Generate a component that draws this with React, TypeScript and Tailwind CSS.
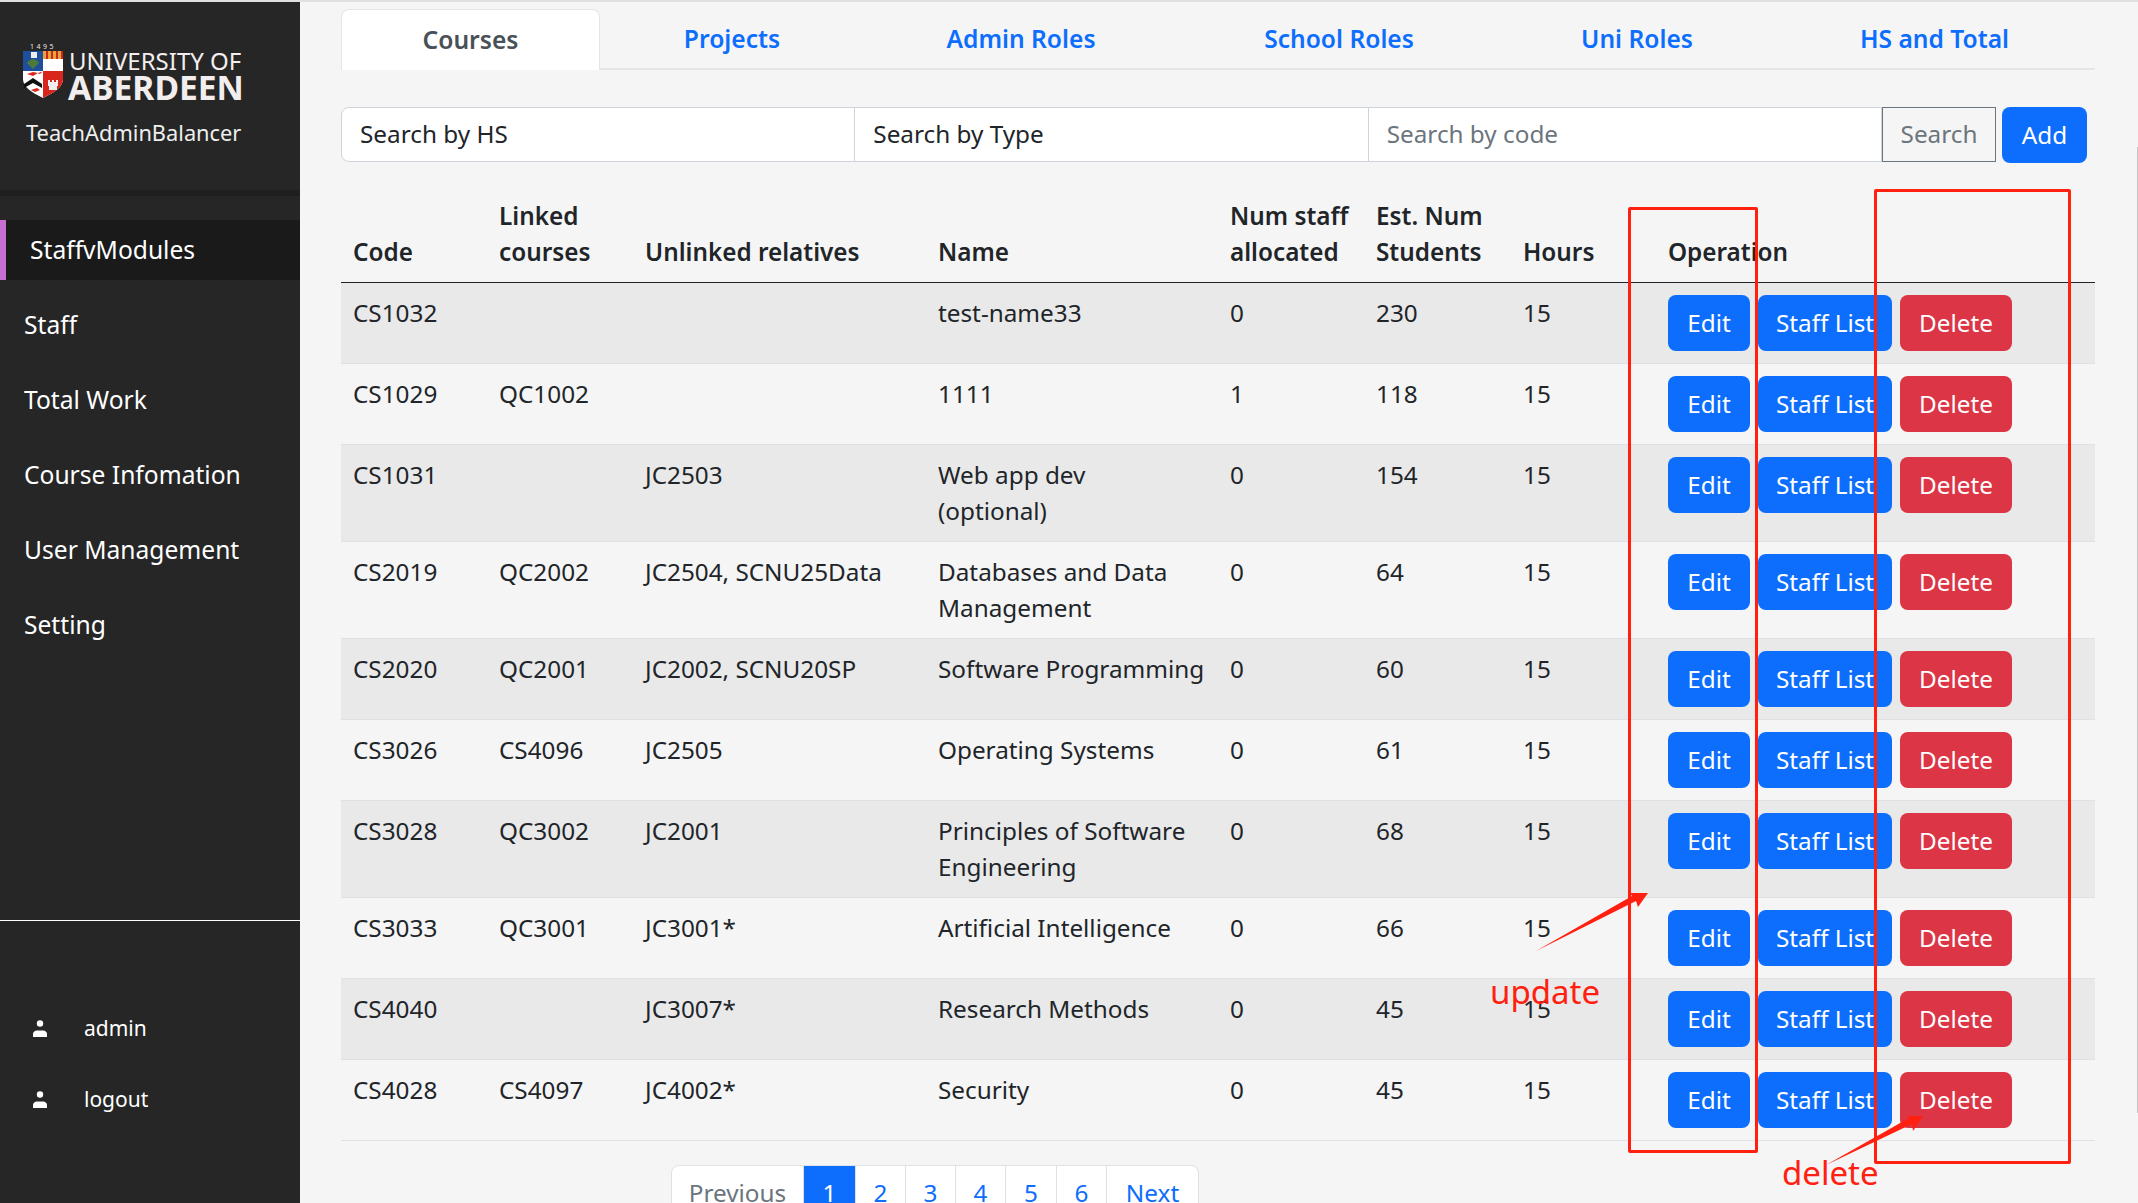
const font = { fontFamily: '"Noto Sans", sans-serif' }

const tabs = [
  { label: 'Courses', width: 'w-[259px]' },
  { label: 'Projects', width: 'w-[264px]' },
  { label: 'Admin Roles', width: 'w-[314px]' },
  { label: 'School Roles', width: 'w-[322px]' },
  { label: 'Uni Roles', width: 'w-[274px]' },
  { label: 'HS and Total', width: 'w-[321px]' },
]

const navItems = ['Staff', 'Total Work', 'Course Infomation', 'User Management', 'Setting']

const rows = [
  ['CS1032', '', '', 'test-name33', '0', '230'],
  ['CS1029', 'QC1002', '', '1111', '1', '118'],
  ['CS1031', '', 'JC2503', 'Web app dev\n(optional)', '0', '154'],
  ['CS2019', 'QC2002', 'JC2504, SCNU25Data', 'Databases and Data\nManagement', '0', '64'],
  ['CS2020', 'QC2001', 'JC2002, SCNU20SP', 'Software Programming', '0', '60'],
  ['CS3026', 'CS4096', 'JC2505', 'Operating Systems', '0', '61'],
  ['CS3028', 'QC3002', 'JC2001', 'Principles of Software\nEngineering', '0', '68'],
  ['CS3033', 'QC3001', 'JC3001*', 'Artificial Intelligence', '0', '66'],
  ['CS4040', '', 'JC3007*', 'Research Methods', '0', '45'],
  ['CS4028', 'CS4097', 'JC4002*', 'Security', '0', '45'],
]

const pages = [
  { label: 'Previous', cls: 'w-[133px] text-[#6c757d] bg-white' },
  { label: '1', cls: 'w-[52px] text-white bg-[#0d6efd]' },
  { label: '2', cls: 'w-[50px] text-[#0d6efd] bg-white' },
  { label: '3', cls: 'w-[50px] text-[#0d6efd] bg-white' },
  { label: '4', cls: 'w-[50px] text-[#0d6efd] bg-white' },
  { label: '5', cls: 'w-[51px] text-[#0d6efd] bg-white' },
  { label: '6', cls: 'w-[50px] text-[#0d6efd] bg-white' },
  { label: 'Next', cls: 'w-[92px] text-[#0d6efd] bg-white' },
]

function Shield() {
  return (
    <svg width="42" height="56" viewBox="0 0 42 56" className="mb-[2px] shrink-0">
      <text x="21" y="6" textAnchor="middle" fontSize="7" letterSpacing="2.5" fill="#e5e5e5">1495</text>
      <path d="M1 8h40v28c0 8-8 13-20 19C9 49 1 44 1 36z" fill="#fff" />
      <path d="M1 8h20v20H1z" fill="#1f4e9c" />
      <path d="M21 8h20v8H21z" fill="#e9a13b" />
      <path d="M24 8h2v8h-2zM29 8h2v8h-2zM34 8h2v8h-2zM39 8h2v8h-2z" fill="#c8281e" />
      <path d="M21 28h20v8c0 8-8 13-20 19z" fill="#d9261c" />
      <path d="M9 9h6v6H9z" fill="#eee" />
      <path d="M5 20c3-5 9-5 12 0l-6 6z" fill="#4c7a3a" />
      <path d="M5 31l6-2 5 1-5 3zM17 31l-1-1 3-1 1 1z" fill="#d9261c" />
      <path d="M2 41l9-6 9 6v4l-9-5-9 5z" fill="#111" />
      <path d="M9 47l6-2 3 2-5 2z" fill="#d9261c" />
      <path d="M26 43v-6h2v2h2v-2h2v2h2v-2h2v6h-1v4h-8v-4z" fill="#eee" />
    </svg>
  )
}

function UserIcon() {
  return (
    <svg width="14" height="17" viewBox="0 0 14 17" className="shrink-0 fill-white">
      <circle cx="7" cy="3.5" r="3.2" />
      <path d="M0 17v-3c0-2 2-3.5 4-3.5h6c2 0 4 1.5 4 3.5v3z" />
    </svg>
  )
}

function Sidebar() {
  return (
    <aside className="flex w-[300px] shrink-0 flex-col bg-[#262626] text-white">
      <div className="h-[188px] pl-[22px] pt-[41px]">
        <div className="flex items-end gap-[4px]">
          <Shield />
          <div className="leading-none text-[#f3eeee]">
            <div className="pl-[1px] text-[24px] leading-[26px]">UNIVERSITY OF</div>
            <div className="text-[33.6px] font-bold leading-[27px]">ABERDEEN</div>
          </div>
        </div>
        <div className="mt-[17px] pl-[4px] text-[21.8px] leading-[30px] text-[#eeeeee]">TeachAdminBalancer</div>
      </div>
      <div className="h-[6px] bg-[#1f1f1f]" />
      <nav className="mt-[24px] text-[24.6px]">
        <div className="flex h-[60px] items-center border-l-[6px] border-[#c56fd0] bg-[#1a1a1a] pl-[24px]">StaffvModules</div>
        <div className="mt-[15px] flex flex-col gap-[15px]">
          {navItems.map((item) => (
            <div key={item} className="flex h-[60px] items-center pl-[24px]">{item}</div>
          ))}
        </div>
      </nav>
      <div className="mt-[265px] h-[1px] bg-white" />
      <div className="flex flex-col gap-[54px] pl-[33px] pt-[99px] text-[21px]">
        {['admin', 'logout'].map((item) => (
          <div key={item} className="flex h-[17px] items-center gap-[37px]">
            <UserIcon />
            <span>{item}</span>
          </div>
        ))}
      </div>
    </aside>
  )
}

function Row({ cells }: { cells: string[] }) {
  const [code, linked, unlinked, name, num, est] = cells
  return (
    <div className="grid grid-cols-[146px_146px_293px_292px_146px_147px_145px_439px] border-b border-[#dee2e6] odd:bg-[#e9e9e9]">
      {[code, linked, unlinked, name, num, est, '15'].map((cell, i) => (
        <div key={i} className="whitespace-pre-line px-3 py-3 leading-[36px] text-[#212529]">{cell}</div>
      ))}
      <div className="flex gap-2 px-3 py-3 text-white">
        <button className="h-14 w-[82px] rounded-[8px] bg-[#0d6efd]">Edit</button>
        <button className="h-14 w-[134px] rounded-[8px] bg-[#0d6efd]">Staff List</button>
        <button className="h-14 w-[112px] rounded-[8px] bg-[#dc3545]">Delete</button>
      </div>
    </div>
  )
}

function Annotations() {
  return (
    <>
      <div className="absolute left-[1628px] top-[207px] h-[946px] w-[130px] rounded-[2px] border-[3px] border-[#ff2010]" />
      <div className="absolute left-[1874px] top-[189px] h-[975px] w-[197px] rounded-[2px] border-[3px] border-[#ff2010]" />
      <svg width="2138" height="1203" className="pointer-events-none absolute left-0 top-0">
        <polygon points="1536,951 1632,896 1630,893 1648,893 1638,907 1636,901" fill="#ff2010" />
        <polygon points="1826,1165 1909,1118 1907,1116 1923,1116 1913,1131 1912,1124" fill="#ff2010" />
      </svg>
      <span className="absolute left-[1490px] top-[969px] text-[33px] leading-[46px] text-[#ff2010]">update</span>
      <span className="absolute left-[1782px] top-[1150px] text-[33px] leading-[46px] text-[#ff2010]">delete</span>
    </>
  )
}

export default function App() {
  return (
    <div style={font} className="relative h-[1203px] w-[2138px] overflow-hidden bg-[#f5f5f5] pt-[2px] text-[24.3px]">
      <div className="absolute left-0 top-0 h-[2px] w-full bg-[#e0e0e0]" />
      <div className="absolute right-0 top-[147px] h-[966px] w-[1px] bg-[#c4c4c4]" />
      <div className="flex h-full">
        <Sidebar />
        <main className="ml-[41px] w-[1754px] pt-[7px]">
          <div className="flex h-[61px] border-b-2 border-[#e5e5e5]">
            {tabs.map((tab, i) => (
              <div
                key={tab.label}
                className={`flex h-[61px] items-center justify-center rounded-t-[8px] text-[24.6px] font-semibold ${tab.width} ${i === 0 ? 'border border-b-0 border-[#e5e5e5] bg-white text-[#495057]' : 'text-[#0d6efd]'}`}
              >
                {tab.label}
              </div>
            ))}
          </div>
          <div className="mt-[37px] flex items-stretch">
            <div className="flex h-[55px] w-[1541px] rounded-l-[8px] border border-[#ced4da] bg-white">
              <div className="flex flex-1 items-center border-r border-[#ced4da] px-[18px] text-[#212529]">Search by HS</div>
              <div className="flex flex-1 items-center border-r border-[#ced4da] px-[18px] text-[#212529]">Search by Type</div>
              <div className="flex flex-1 items-center px-[18px] text-[#6c757d]">Search by code</div>
            </div>
            <div className="flex h-[55px] w-[114px] items-center justify-center border border-[#6c757d] text-[#6c757d]">Search</div>
            <div className="ml-[6px] flex h-[56px] w-[85px] items-center justify-center rounded-[8px] bg-[#0d6efd] text-white">Add</div>
          </div>
          <div className="mt-[23px] grid grid-cols-[146px_146px_293px_292px_146px_147px_145px_439px] border-b border-[#212529] font-semibold text-[#212529]">
            {['Code', 'Linked courses', 'Unlinked relatives', 'Name', 'Num staff allocated', 'Est. Num Students', 'Hours', 'Operation'].map((h) => (
              <div key={h} className="flex items-end px-3 py-3 leading-[36px]">{h}</div>
            ))}
          </div>
          <div>
            {rows.map((cells) => (
              <Row key={cells[0]} cells={cells} />
            ))}
          </div>
          <div className="ml-[330px] mt-[24px] flex h-[56px]">
            {pages.map((p, i) => (
              <div
                key={p.label}
                className={`flex items-center justify-center border-y border-r border-[#dee2e6] ${p.cls} ${i === 0 ? 'rounded-l-[8px] border-l' : ''} ${i === pages.length - 1 ? 'rounded-r-[8px]' : ''}`}
              >
                {p.label}
              </div>
            ))}
          </div>
        </main>
      </div>
      <Annotations />
    </div>
  )
}
